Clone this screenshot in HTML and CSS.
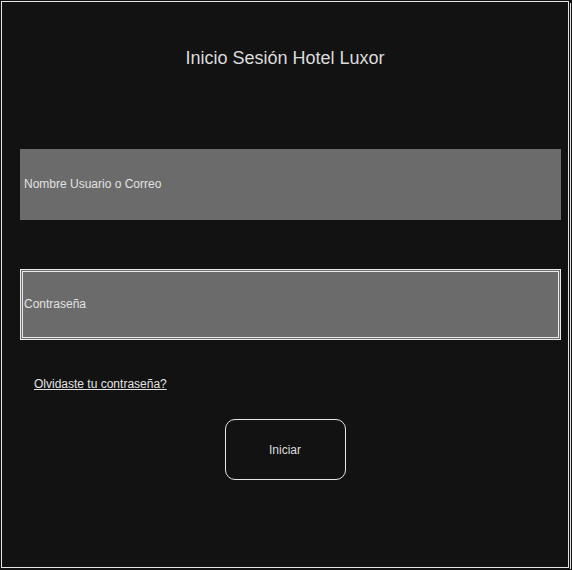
FILE: index.html
```html
<!DOCTYPE html>
<html lang="es">
<head>
<meta charset="utf-8">
<title>Inicio Sesión Hotel Luxor</title>
<link rel="stylesheet" href="styles.css">
</head>
<body>
<div class="frame">
  <h1 class="title">Inicio Sesión Hotel Luxor</h1>
  <div class="field field-user">Nombre Usuario o Correo</div>
  <div class="field field-pass">Contraseña</div>
  <a class="forgot" href="#">Olvidaste tu contraseña?</a>
  <button class="submit" type="button">Iniciar</button>
</div>
</body>
</html>
```

FILE: styles.css
```css
html, body {
  margin: 0;
  padding: 0;
  background: #121212;
}
body {
  font-family: "Liberation Sans", Arial, sans-serif;
  color: #dcdcdc;
}
.frame {
  box-sizing: border-box;
  margin: 1px;
  width: 568px;
  height: 567px;
  border: 1px solid #e6e6e6;
  box-shadow: 1px 1px 0 #121212, 2px 2px 0 #e6e6e6;
  display: flex;
  flex-direction: column;
  padding: 0;
}
.title {
  margin: 46px 0 0;
  font-size: 18px;
  font-weight: normal;
  line-height: 21px;
  text-align: center;
  color: #dcdcdc;
}
.field {
  box-sizing: border-box;
  height: 71px;
  margin-left: 18px;
  margin-right: 7px;
  background: #6b6b6b;
  display: flex;
  align-items: center;
  padding-left: 4px;
  font-size: 12px;
  color: #e2e2e2;
}
.field-user {
  margin-top: 80px;
  padding-bottom: 1px;
}
.field-pass {
  margin-top: 49px;
  border: 3px double #ececec;
  padding-left: 1px;
  padding-bottom: 2px;
}
.forgot {
  align-self: flex-start;
  margin: 37px 0 0 32px;
  font-size: 12px;
  line-height: 14px;
  color: #e2e2e2;
  text-decoration: underline;
}
.submit {
  align-self: center;
  margin: 28px 0 0;
  width: 121px;
  height: 61px;
  background: transparent;
  border: 1px solid #e6e6e6;
  border-radius: 10px;
  font-family: "Liberation Sans", Arial, sans-serif;
  font-size: 12px;
  color: #dcdcdc;
  cursor: pointer;
}
```
